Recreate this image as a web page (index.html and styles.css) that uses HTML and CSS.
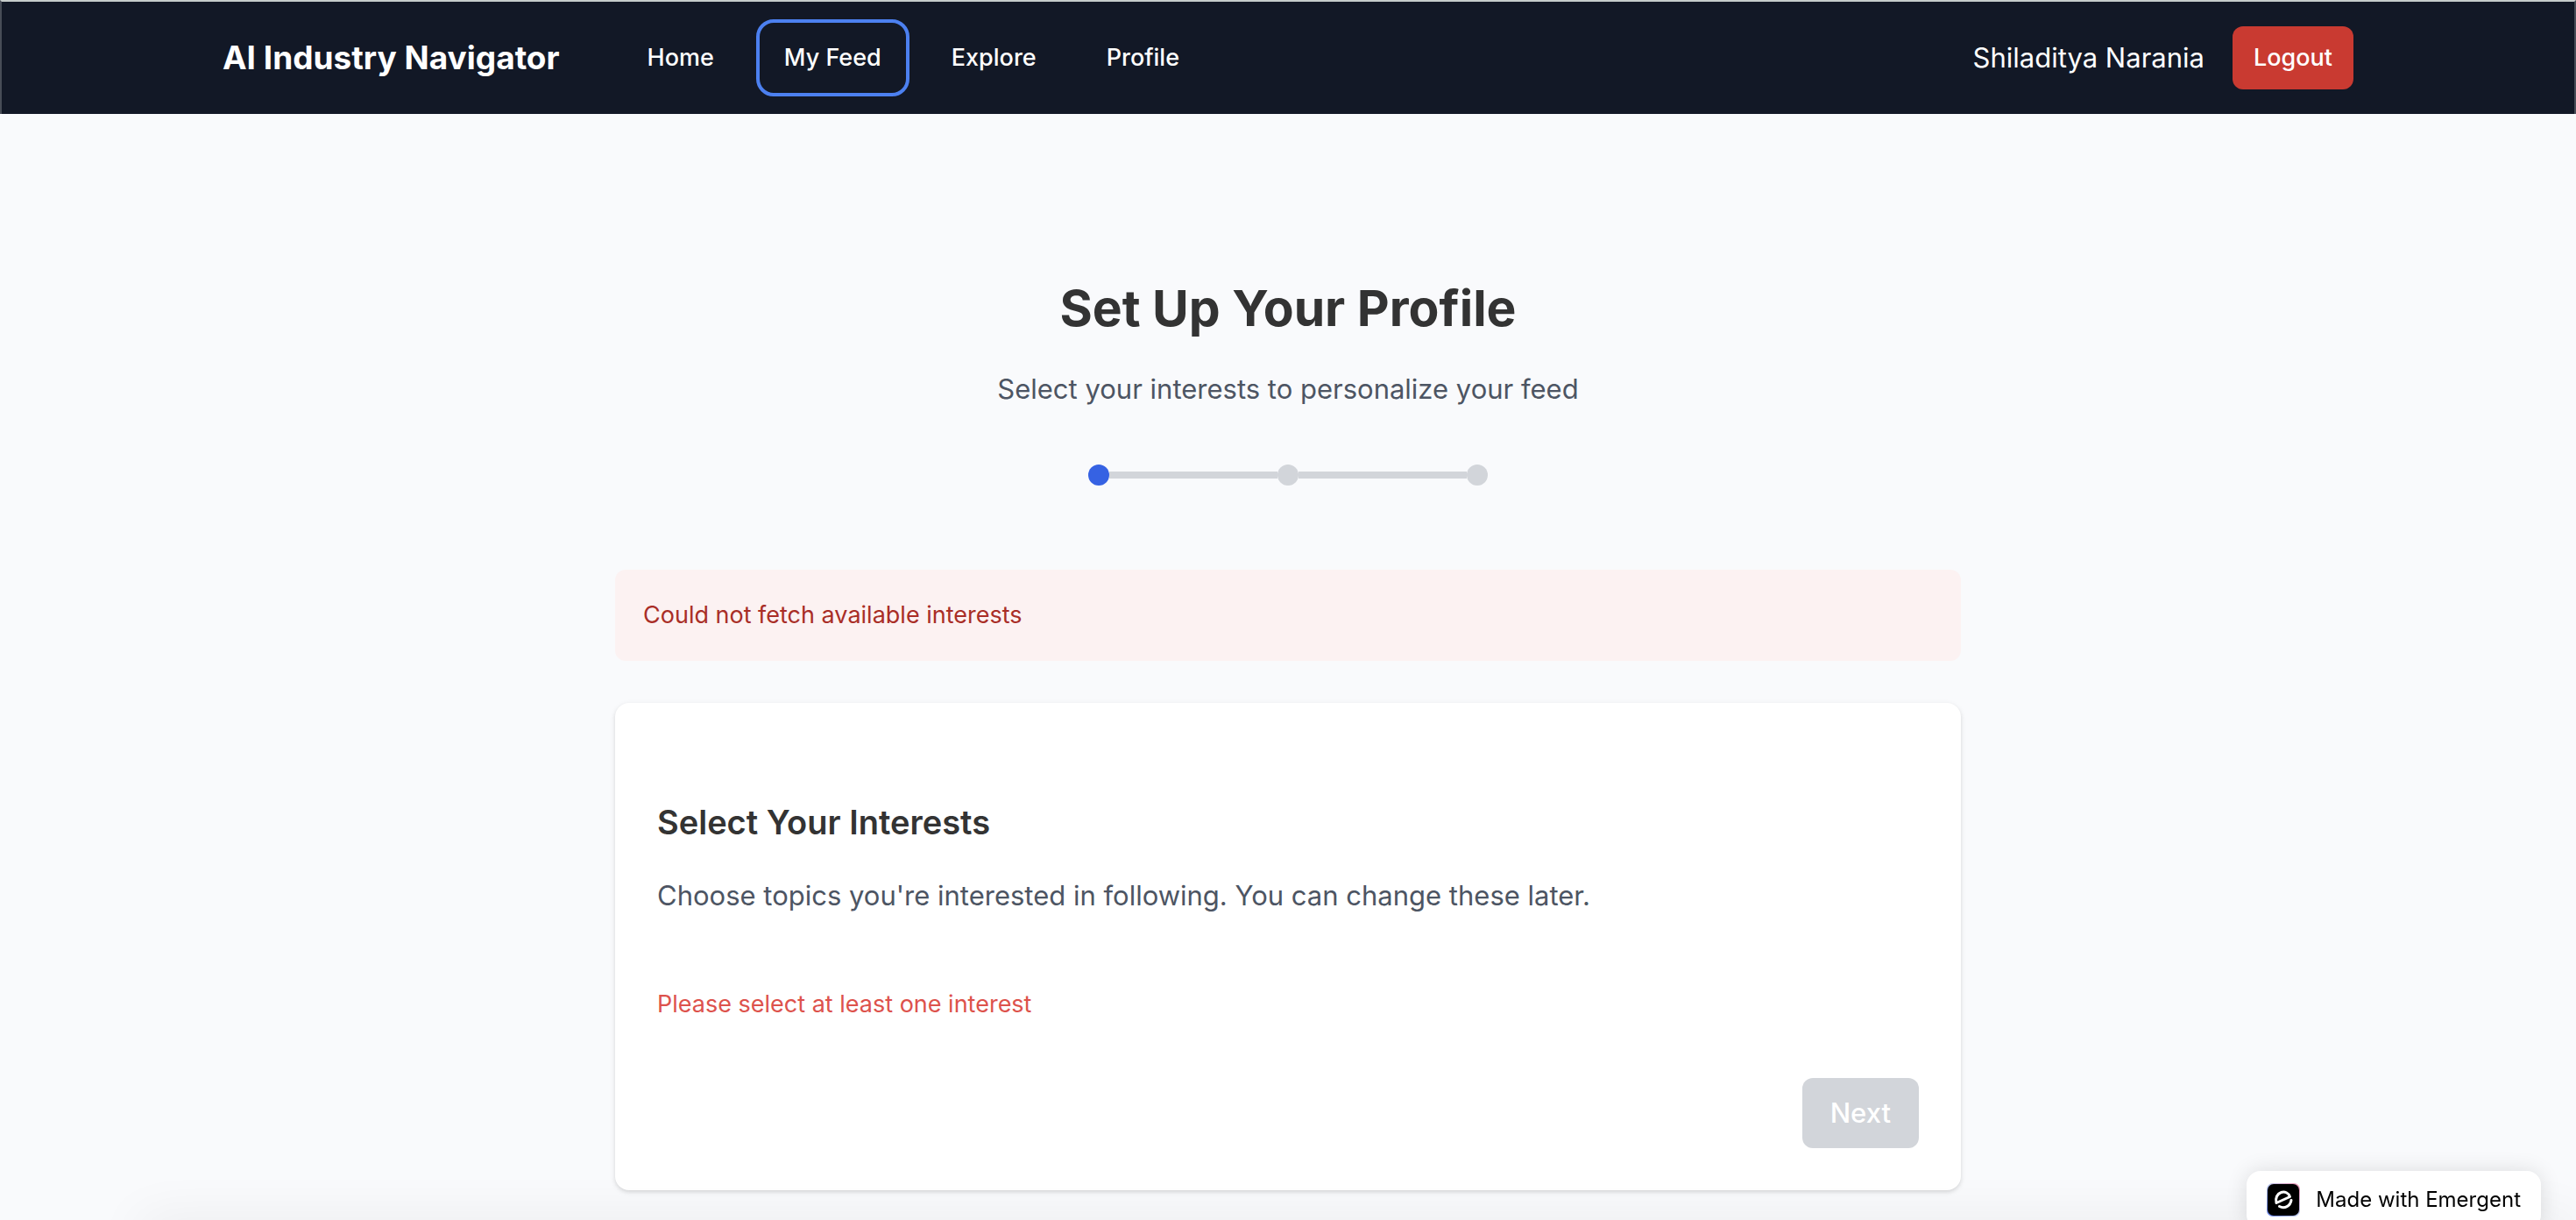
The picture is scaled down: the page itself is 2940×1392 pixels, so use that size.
FILE: index.html
```html
<!DOCTYPE html>
<html lang="en">
<head>
<meta charset="utf-8">
<meta name="viewport" content="width=device-width, initial-scale=1">
<title>AI Industry Navigator</title>
<link rel="stylesheet" href="styles.css">
</head>
<body>
<header class="site-header">
  <div class="header-inner">
    <a class="brand" href="#">AI Industry Navigator</a>
    <nav class="nav" aria-label="Main">
      <a class="nav-link" href="#">Home</a>
      <a class="nav-link nav-link-focus" href="#">My Feed</a>
      <a class="nav-link" href="#">Explore</a>
      <a class="nav-link" href="#">Profile</a>
    </nav>
    <div class="account">
      <span class="user-name">Shiladitya Narania</span>
      <button class="logout" type="button">Logout</button>
    </div>
  </div>
</header>
<main class="setup">
  <h1 class="title">Set Up Your Profile</h1>
  <p class="subtitle">Select your interests to personalize your feed</p>
  <div class="steps" role="img" aria-label="Step 1 of 3">
    <span class="dot dot-active"></span>
    <span class="bar"></span>
    <span class="dot"></span>
    <span class="bar"></span>
    <span class="dot"></span>
  </div>
  <div class="alert" role="alert">Could not fetch available interests</div>
  <section class="card">
    <h2 class="card-title">Select Your Interests</h2>
    <p class="card-text">Choose topics you're interested in following. You can change these later.</p>
    <p class="card-error">Please select at least one interest</p>
    <div class="card-actions">
      <button class="next" type="button" disabled>Next</button>
    </div>
  </section>
</main>
<div class="bottom-shade"></div>
<a class="badge" href="#">
  <svg class="badge-icon" viewBox="0 0 38 38" aria-hidden="true">
    <defs>
      <linearGradient id="glow" x1="1" y1="0" x2="0" y2="1">
        <stop offset="0" stop-color="#ef8fae"/>
        <stop offset=".5" stop-color="#b9c6ee"/>
        <stop offset="1" stop-color="#5f7be6"/>
      </linearGradient>
    </defs>
    <rect width="38" height="38" rx="7" fill="url(#glow)"/>
    <rect x="1" y="1" width="36" height="36" rx="7" fill="#000"/>
    <g fill="none" stroke="#fff" stroke-width="3" stroke-linecap="round" stroke-linejoin="round">
      <path d="M11 22.5L26.5 15.5C25 11 20.500 9 16.500 10.500C12 12 9.500 17 11 22.500"/>
      <path d="M14.500 26.500C20.500 29.500 27 26 28 19.500"/>
    </g>
  </svg>
  <span>Made with Emergent</span>
</a>
</body>
</html>
```
FILE: styles.css
```css
* { box-sizing: border-box; }
body {
  margin: 0;
  min-height: 100vh;
  overflow: hidden;
  background: #f9fafc;
  color: #333;
  font-family: Inter, "Liberation Sans", sans-serif;
  font-size: 31px;
  line-height: 48px;
}
h1, h2, p { margin: 0; }
a { color: inherit; text-decoration: none; }
button { border: 0; font-family: inherit; }

.site-header {
  background: #121826;
  border: 2px solid #474c57;
  border-top-color: #c6cccb;
  border-bottom: 0;
  color: #fff;
}
.header-inner {
  display: flex;
  align-items: center;
  max-width: 2560px;
  height: 128px;
  margin: 0 auto;
  padding: 0 64px;
}
.brand {
  font-size: 37px;
  font-weight: 700;
}
.nav {
  display: flex;
  gap: 32px;
  margin-left: 76px;
}
.nav-link {
  padding: 16px 24px;
  border-radius: 12px;
  font-size: 27px;
  font-weight: 500;
  line-height: 40px;
}
.nav-link-focus {
  outline: 4px solid #4c80f0;
  outline-offset: 4px;
}
.account {
  display: flex;
  align-items: center;
  gap: 32px;
  margin-left: auto;
}
.logout {
  padding: 16px 24px;
  border-radius: 12px;
  background: #c93a31;
  color: #fff;
  font-size: 27px;
  font-weight: 500;
  line-height: 40px;
}

.setup {
  max-width: 1536px;
  margin: 0 auto;
  padding-top: 186px;
}
.title {
  font-size: 57px;
  font-weight: 700;
  line-height: 72px;
  text-align: center;
}
.subtitle {
  margin-top: 32px;
  color: #4d5563;
  text-align: center;
}
.steps {
  display: flex;
  justify-content: center;
  align-items: center;
  margin-top: 62px;
}
.dot {
  width: 24px;
  height: 24px;
  border-radius: 50%;
  background: #d2d5da;
}
.dot-active { background: #3662e3; }
.bar {
  width: 192px;
  height: 8px;
  background: #d2d5da;
}
.alert {
  margin-top: 96px;
  padding: 32px;
  border-radius: 12px;
  background: #fcf2f2;
  color: #a92e27;
  font-size: 27px;
  line-height: 40px;
}
.card {
  margin-top: 48px;
  padding: 108px 48px 48px;
  border-radius: 16px;
  background: #fff;
  box-shadow: 0 2px 6px rgba(0, 0, 0, .1), 0 2px 4px rgba(0, 0, 0, .06);
}
.card-title {
  font-size: 38px;
  font-weight: 600;
  line-height: 56px;
}
.card-text {
  margin-top: 32px;
  color: #4d5563;
}
.card-error {
  margin-top: 80px;
  color: #dd524c;
  font-size: 27px;
  line-height: 40px;
}
.card-actions {
  display: flex;
  justify-content: flex-end;
  margin-top: 64px;
}
.next {
  padding: 16px 32px;
  border-radius: 12px;
  background: #d2d5da;
  color: #fff;
  font-size: 31px;
  font-weight: 500;
  line-height: 48px;
}

.bottom-shade {
  position: fixed;
  right: 0;
  bottom: -40px;
  left: 160px;
  height: 40px;
  box-shadow: 0 0 60px rgba(0, 0, 0, .07);
}
.badge {
  position: fixed;
  right: 40px;
  bottom: -10px;
  display: flex;
  align-items: center;
  gap: 18px;
  height: 66px;
  padding: 0 23px;
  border-radius: 16px;
  background: #fff;
  box-shadow: 0 0 24px rgba(0, 0, 0, .12);
  color: #000;
  font-size: 24px;
}
.badge-icon {
  width: 38px;
  height: 38px;
}
```
